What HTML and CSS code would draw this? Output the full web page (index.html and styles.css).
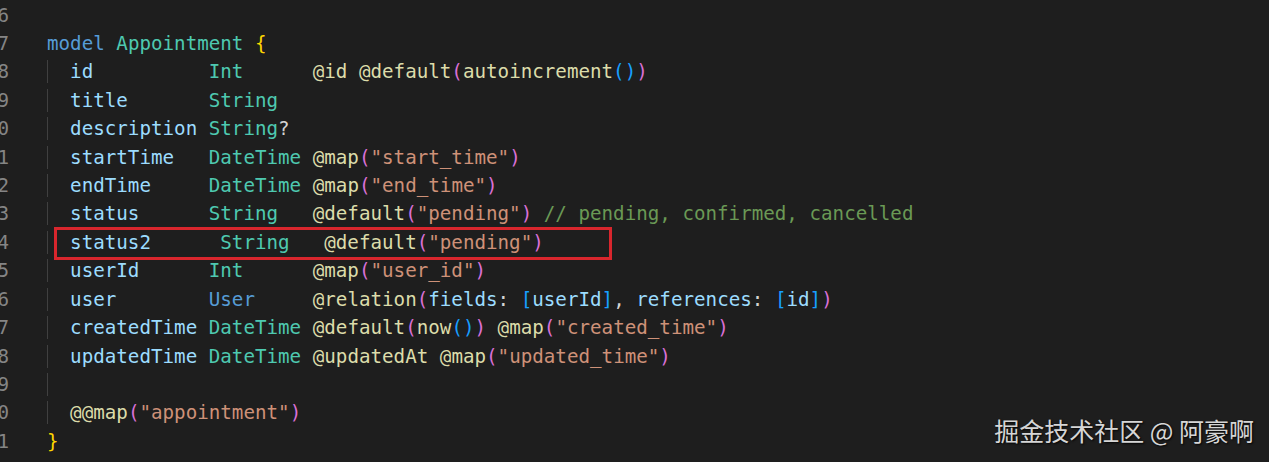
FILE: index.html
```html
<!DOCTYPE html>
<html lang="zh">
<head>
<meta charset="utf-8">
<title>schema.prisma</title>
<link rel="stylesheet" href="styles.css">
</head>
<body>
<div class="editor">
  <div class="line"><span class="ln"><span>16</span></span><span class="code"></span></div>
  <div class="line"><span class="ln"><span>17</span></span><span class="code"><span class="kw">model</span> <span class="ty">Appointment</span> <span class="br">{</span></span></div>
  <div class="line"><span class="ln"><span>18</span></span><span class="code"><span class="ind">  </span><span class="fd">id</span>          <span class="ty">Int</span>      <span class="at">@id</span> <span class="at">@default</span><span class="p1">(</span><span class="at">autoincrement</span><span class="p2">()</span><span class="p1">)</span></span></div>
  <div class="line"><span class="ln"><span>19</span></span><span class="code"><span class="ind">  </span><span class="fd">title</span>       <span class="ty">String</span></span></div>
  <div class="line"><span class="ln"><span>20</span></span><span class="code"><span class="ind">  </span><span class="fd">description</span> <span class="ty">String</span><span class="pu">?</span></span></div>
  <div class="line"><span class="ln"><span>21</span></span><span class="code"><span class="ind">  </span><span class="fd">startTime</span>   <span class="ty">DateTime</span> <span class="at">@map</span><span class="p1">(</span><span class="st">"start_time"</span><span class="p1">)</span></span></div>
  <div class="line"><span class="ln"><span>22</span></span><span class="code"><span class="ind">  </span><span class="fd">endTime</span>     <span class="ty">DateTime</span> <span class="at">@map</span><span class="p1">(</span><span class="st">"end_time"</span><span class="p1">)</span></span></div>
  <div class="line"><span class="ln"><span>23</span></span><span class="code"><span class="ind">  </span><span class="fd">status</span>      <span class="ty">String</span>   <span class="at">@default</span><span class="p1">(</span><span class="st">"pending"</span><span class="p1">)</span> <span class="cm">// pending, confirmed, cancelled</span></span></div>
  <div class="line mark"><span class="ln"><span>24</span></span><span class="code"><span class="ind">  </span><span class="fd">status2</span>      <span class="ty">String</span>   <span class="at">@default</span><span class="p1">(</span><span class="st">"pending"</span><span class="p1">)</span></span><span class="box"></span></div>
  <div class="line"><span class="ln"><span>25</span></span><span class="code"><span class="ind">  </span><span class="fd">userId</span>      <span class="ty">Int</span>      <span class="at">@map</span><span class="p1">(</span><span class="st">"user_id"</span><span class="p1">)</span></span></div>
  <div class="line"><span class="ln"><span>26</span></span><span class="code"><span class="ind">  </span><span class="fd">user</span>        <span class="kw">User</span>     <span class="at">@relation</span><span class="p1">(</span><span class="fd">fields</span><span class="pu">:</span> <span class="p2">[</span><span class="fd">userId</span><span class="p2">]</span><span class="pu">,</span> <span class="fd">references</span><span class="pu">:</span> <span class="p2">[</span><span class="fd">id</span><span class="p2">]</span><span class="p1">)</span></span></div>
  <div class="line"><span class="ln"><span>27</span></span><span class="code"><span class="ind">  </span><span class="fd">createdTime</span> <span class="ty">DateTime</span> <span class="at">@default</span><span class="p1">(</span><span class="at">now</span><span class="p2">()</span><span class="p1">)</span> <span class="at">@map</span><span class="p1">(</span><span class="st">"created_time"</span><span class="p1">)</span></span></div>
  <div class="line"><span class="ln"><span>28</span></span><span class="code"><span class="ind">  </span><span class="fd">updatedTime</span> <span class="ty">DateTime</span> <span class="at">@updatedAt</span> <span class="at">@map</span><span class="p1">(</span><span class="st">"updated_time"</span><span class="p1">)</span></span></div>
  <div class="line"><span class="ln"><span>29</span></span><span class="code"><span class="ind">  </span></span></div>
  <div class="line"><span class="ln"><span>30</span></span><span class="code"><span class="ind">  </span><span class="at">@@map</span><span class="p1">(</span><span class="st">"appointment"</span><span class="p1">)</span></span></div>
  <div class="line"><span class="ln"><span>31</span></span><span class="code"><span class="br">}</span></span></div>
</div>
<div class="watermark">掘金技术社区 @ 阿豪啊</div>
</body>
</html>
```
FILE: styles.css
```css
html, body {
  margin: 0;
  padding: 0;
  background: #1e1e1e;
  width: 1269px;
  height: 462px;
  overflow: hidden;
}

.editor {
  display: flex;
  flex-direction: column;
  padding-top: 1.5px;
  font-family: "DejaVu Sans Mono", "Liberation Mono", monospace;
  font-size: 19.2px;
  line-height: 28.43px;
  color: #d4d4d4;
}

.line {
  position: relative;
  display: flex;
  height: 28.43px;
}

.ln {
  width: 9px;
  margin-right: 38px;
  display: flex;
  justify-content: flex-end;
  overflow: hidden;
  color: #858585;
  flex: none;
}

.code {
  white-space: pre;
}

.ind {
  box-shadow: inset 1px 0 0 #404040;
}

.kw { color: #569cd6; }
.ty { color: #4ec9b0; }
.fd { color: #9cdcfe; }
.at { color: #dcdcaa; }
.st { color: #ce9178; }
.cm { color: #6a9955; }
.pu { color: #d4d4d4; }
.br { color: #ffd700; }
.p1 { color: #da70d6; }
.p2 { color: #179fff; }

.box {
  position: absolute;
  left: 54px;
  top: -2px;
  width: 558px;
  height: 33px;
  box-sizing: border-box;
  border: 3px solid #d9262d;
  pointer-events: none;
}

.watermark {
  position: absolute;
  right: 15px;
  bottom: 19px;
  font-family: "Noto Sans CJK SC", "Noto Sans", sans-serif;
  font-size: 25px;
  line-height: 26px;
  color: #d6d6d6;
  text-shadow: 1px 1px 2px rgba(0, 0, 0, 0.9);
  white-space: nowrap;
}
```
